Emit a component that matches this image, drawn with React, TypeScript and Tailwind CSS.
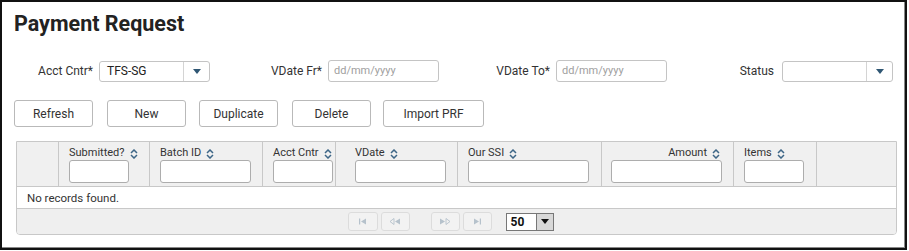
import React from 'react'

const font = { fontFamily: 'Roboto, "Liberation Sans", sans-serif' }

function Caret() {
  return (
    <svg width="8" height="5" viewBox="0 0 8 5">
      <path d="M0 0 L8 0 L4 5 Z" fill="#2f5673" />
    </svg>
  )
}

function SortIcon() {
  return (
    <svg width="8" height="10" viewBox="0 0 8 10" className="ml-[5px] shrink-0">
      <path d="M1 4 L4 1 L7 4" fill="none" stroke="#3d6687" strokeWidth="1.5" />
      <path d="M1 6 L4 9 L7 6" fill="none" stroke="#3d6687" strokeWidth="1.5" />
    </svg>
  )
}

function Select({ value, width }: { value?: string; width: string }) {
  return (
    <div className={`${width} h-[21px] flex border border-[#c4c4c4] rounded-[3px] bg-white`}>
      <div className="flex-1 px-[7px] text-[12px] leading-[19px] text-[#222]">{value}</div>
      <div className="w-[26px] border-l border-[#d4d4d4] flex items-center justify-center">
        <Caret />
      </div>
    </div>
  )
}

function DateInput({ width }: { width: string }) {
  return (
    <div className={`${width} h-[22px] border border-[#c4c4c4] rounded-[3px] bg-white px-[5px] text-[11px] leading-[20px] text-[#a0a0a0]`}>
      dd/mm/yyyy
    </div>
  )
}

function Btn({ label, width }: { label: string; width: string }) {
  return (
    <button className={`${width} h-[27px] border border-[#b9b9b9] rounded-[3px] bg-white text-[12px] text-[#333]`}>
      {label}
    </button>
  )
}

function PagerBtn({ kind, width }: { kind: 'first' | 'prev' | 'next' | 'last'; width: string }) {
  const c = '#b6c2cc'
  return (
    <div className={`${width} h-[19px] border border-[#dcdcdc] rounded-[3px] bg-[#f2f2f2] flex items-center justify-center`}>
      <svg width="12" height="7" viewBox="0 0 12 7">
        {kind === 'first' && (
          <>
            <rect x="2" y="0.5" width="1.2" height="6" fill={c} />
            <path d="M4 3.5 L9 0.5 L9 6.5 Z" fill={c} />
          </>
        )}
        {kind === 'prev' && (
          <>
            <path d="M1 3.5 L5 0.5 L5 6.5 Z" fill="none" stroke={c} strokeWidth="0.9" />
            <path d="M6 3.5 L11 0.5 L11 6.5 Z" fill={c} />
          </>
        )}
        {kind === 'next' && (
          <>
            <path d="M1 0.5 L6 3.5 L1 6.5 Z" fill={c} />
            <path d="M7 0.5 L11 3.5 L7 6.5 Z" fill="none" stroke={c} strokeWidth="0.9" />
          </>
        )}
        {kind === 'last' && (
          <>
            <path d="M3 0.5 L8 3.5 L3 6.5 Z" fill={c} />
            <rect x="8.8" y="0.5" width="1.2" height="6" fill={c} />
          </>
        )}
      </svg>
    </div>
  )
}

const cols = [
  { w: 'w-[42px]', pl: 'pl-[10px]', label: '' },
  { w: 'w-[91px]', pl: 'pl-[10px]', label: 'Submitted?', input: 'w-[60px]' },
  { w: 'w-[113px]', pl: 'pl-[10px]', label: 'Batch ID', input: 'w-[91px]' },
  { w: 'w-[73px]', pl: 'pl-[10px]', label: 'Acct Cntr', input: 'w-[60px]' },
  { w: 'w-[122px]', pl: 'pl-[19px]', label: 'VDate', input: 'w-[91px]' },
  { w: 'w-[144px]', pl: 'pl-[10px]', label: 'Our SSI', input: 'w-[121px]' },
  { w: 'w-[132px]', pl: 'pl-[9px]', label: 'Amount', input: 'w-[111px]', right: true },
  { w: 'w-[83px]', pl: 'pl-[10px]', label: 'Items', input: 'w-[60px]' },
  { w: 'w-[81px]', pl: 'pl-[10px]', label: '' },
]

export default function App() {
  return (
    <div className="bg-white w-[909px] h-[251px]" style={font}>
      <div className="w-[907px] h-[250px] border-2 border-[#111] shadow-[inset_-1px_-1px_0_#888]">
        <h1 className="pl-[12px] pt-[8px] text-[21.5px] font-bold text-[#222] leading-[27px]">Payment Request</h1>

        <div className="flex items-center mt-[23px] pl-[7px] text-[12px] text-[#333]">
          <div className="w-[90px] text-right pr-[6px]">Acct Cntr*</div>
          <Select value="TFS-SG" width="w-[111px]" />
          <div className="w-[118px] text-right pr-[6px]">VDate Fr*</div>
          <DateInput width="w-[111px]" />
          <div className="w-[117px] text-right pr-[6px]">VDate To*</div>
          <DateInput width="w-[111px]" />
          <div className="w-[115px] text-right pr-[8px]">Status</div>
          <Select width="w-[111px]" />
        </div>

        <div className="flex items-center mt-[18px] pl-[12px]">
          <Btn label="Refresh" width="w-[79px]" />
          <div className="w-[14px]" />
          <Btn label="New" width="w-[79px]" />
          <div className="w-[13px]" />
          <Btn label="Duplicate" width="w-[79px]" />
          <div className="w-[14px]" />
          <Btn label="Delete" width="w-[79px]" />
          <div className="w-[12px]" />
          <Btn label="Import PRF" width="w-[101px]" />
        </div>

        <div className="ml-[14px] mt-[14px] w-[881px] border border-[#c8c8c8] rounded-b-[4px] overflow-hidden text-[12px] text-[#333]">
          <div className="flex bg-[#f0f0f0] h-[45px] border-b border-[#c8c8c8]">
            {cols.map((c, i) => (
              <div
                key={i}
                className={`${c.w} shrink-0 ${i < cols.length - 1 ? 'border-r border-[#c8c8c8]' : ''} ${c.pl} pt-[5px]`}
              >
                {c.label && (
                  <>
                    <div className={`flex items-center h-[13px] whitespace-nowrap text-[11px] ${c.right ? 'justify-end pr-[13px]' : ''}`}>
                      <span>{c.label}</span>
                      <SortIcon />
                    </div>
                    <div className={`${c.input} h-[23px] bg-white border border-[#adadad] rounded-[3px]`} />
                  </>
                )}
              </div>
            ))}
          </div>
          <div className="h-[22px] leading-[22px] pl-[10px] border-b border-[#c8c8c8] bg-white text-[11.5px]">No records found.</div>
          <div className="h-[25px] bg-[#efefef] flex items-center justify-center pr-[12px]">
            <PagerBtn kind="first" width="w-[30px]" />
            <div className="w-[3px]" />
            <PagerBtn kind="prev" width="w-[29px]" />
            <div className="w-[21px]" />
            <PagerBtn kind="next" width="w-[29px]" />
            <div className="w-[3px]" />
            <PagerBtn kind="last" width="w-[29px]" />
            <div className="w-[14px]" />
            <div className="w-[48px] h-[18px] flex border border-[#777] bg-white">
              <div className="flex-1 pl-[4px] text-[12px] font-bold leading-[16px] text-[#111]">50</div>
              <div className="w-[17px] bg-[#d8d8d8] border-l border-[#777] flex items-center justify-center">
                <svg width="8" height="5" viewBox="0 0 8 5">
                  <path d="M0 0 L8 0 L4 5 Z" fill="#111" />
                </svg>
              </div>
            </div>
          </div>
        </div>
      </div>
    </div>
  )
}
